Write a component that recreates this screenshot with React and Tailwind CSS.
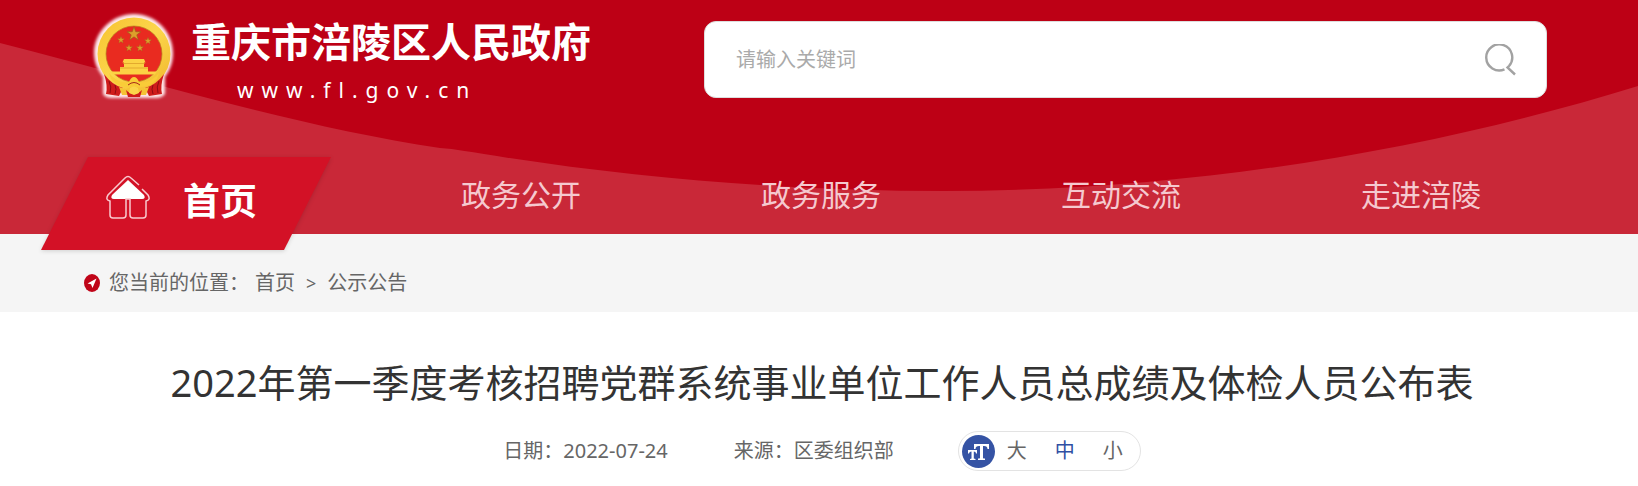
const STAR = "0,-10 2.4,-3.1 9.5,-3.1 3.8,1.2 5.9,8.1 0,3.9 -5.9,8.1 -3.8,1.2 -9.5,-3.1 -2.4,-3.1";

const SMALL_STARS = [
  [31, 30],
  [58, 31],
  [39, 38],
  [50, 38],
];

const NAV = ["政务公开", "政务服务", "互动交流", "走进涪陵"];

const SIZES = [
  { label: "大", active: false },
  { label: "中", active: true },
  { label: "小", active: false },
];

function Emblem() {
  return (
    <svg viewBox="0 0 88 94" className="h-[94px] w-[88px] shrink-0" aria-hidden="true">
      <defs>
        <filter id="glow" x="-10%" y="-10%" width="120%" height="120%">
          <feGaussianBlur stdDeviation="1.4" />
        </filter>
        <linearGradient id="gold" x1="0" y1="0" x2="1" y2="1">
          <stop offset="0" stopColor="#f6c22f" />
          <stop offset="0.5" stopColor="#fcd64c" />
          <stop offset="1" stopColor="#f0b62a" />
        </linearGradient>
      </defs>
      <path
        d="M44 4C65 4 83 21 83 43C83 53 80 60 75 67V84Q72 88 66 88H22Q15 88 13 84V67C8 60 4 53 4 43C4 21 23 4 44 4Z"
        fill="#ffe9eb"
        filter="url(#glow)"
      />
      <circle cx="44" cy="44" r="36.500" fill="url(#gold)" />
      <circle cx="44" cy="44" r="28" fill="#e92b20" stroke="#b98020" strokeWidth="0.7" />
      <polygon points={STAR} transform="translate(44 24) scale(0.72)" fill="#dda02b" stroke="#93651a" strokeWidth="0.8" />
      {SMALL_STARS.map(([x, y]) => (
        <polygon key={x} points={STAR} transform={`translate(${x} ${y}) scale(0.38)`} fill="#dda02b" stroke="#93651a" strokeWidth="0.8" />
      ))}
      <path d="M34 49H54L55.500 52.500H54V57H58V61.500H67L65 64.500H23L21 61.500H30V57H34V52.500H32.500Z" fill="#fcd244" />
      <path d="M33 53.500H55M30 58H58" stroke="#d99a25" strokeWidth="0.7" />
      <path d="M14 64Q22 75 33 78L29 86L16 84Q18 76 14 64Z M74 64Q66 75 55 78L59 86L72 84Q70 76 74 64Z" fill="#cf1c1b" />
      <path d="M19 71Q22 77 20 83M25 75Q27 79 25 84M69 71Q66 77 68 83M63 75Q61 79 63 84" stroke="#8f0c12" strokeWidth="1" fill="none" />
      <path d="M19 63Q28 74 39 72Q41 67 44 67Q47 67 49 72Q60 74 69 63L67 69Q59 78 49 77L44 79L39 77Q29 78 21 69Z" fill="#f9cc38" />
      <path d="M29 77L36 79Q44 75 52 79L59 77L56 85H32Z" fill="#f5c335" />
      <path d="M36 80Q44 88 52 80L50 87H38Z" fill="#cf1c1b" />
      <path d="M40 78Q44 75 48 78L49 83L44 85L39 83Z" fill="#fbd54b" />
      <path d="M38 75Q44 70 50 75" stroke="#a8281a" strokeWidth="1" fill="none" />
    </svg>
  );
}

export default function App() {
  return (
    <div className="bg-white font-['Noto_Sans','Noto_Sans_CJK_SC',sans-serif] text-[#666]">
      <header className="relative isolate bg-[#bd0015]">
        <svg
          viewBox="0 0 1638 234"
          preserveAspectRatio="none"
          className="absolute inset-0 -z-10 h-full w-full"
          aria-hidden="true"
        >
          <path d="M0 43C148 81 300 127 440 148C456 149 470 152 484 154C630 178 790 191 944 191C1210 191 1450 144 1638 86V234H0Z" fill="#c92838" />
        </svg>
        <div className="flex h-[157px] items-start justify-between pr-[91px] pl-[90px]">
          <a href="#home" className="flex items-start gap-[13px] pt-2.5 text-white">
            <Emblem />
            <span className="flex flex-col items-start gap-3 pt-2">
              <span className="text-[40px] leading-[48px] font-bold">重庆市涪陵区人民政府</span>
              <span className="pl-[46px] text-[21px] leading-6 tracking-[8px]">www.fl.gov.cn</span>
            </span>
          </a>
          <form className="mt-[21px] flex h-[77px] w-[843px] items-center rounded-xl border border-[#ddd] bg-white pr-[30px] pl-[31px]">
            <input
              type="text"
              aria-label="请输入关键词"
              placeholder="请输入关键词"
              className="min-w-0 flex-1 text-[20px] outline-none placeholder:text-[#aaa]"
            />
            <button type="button" aria-label="搜索">
              <svg viewBox="0 0 32 32" className="size-8" fill="none" stroke="#a2a2a2" strokeWidth="2.400">
                <path d="M20.500 25.300A13 13 0 1 1 25 22L23.500 23.500L31 30.500" />
              </svg>
            </button>
          </form>
        </div>
        <nav className="flex h-[77px] items-start pr-[67px] pl-[41px]">
          <a href="#home" className="relative isolate -mb-4 flex h-[94px] w-[330px] shrink-0 items-center gap-8 pb-1.5 pl-16 text-white">
            <svg viewBox="0 0 292 96" className="absolute top-0 left-0 -z-10 h-24 w-[292px] drop-shadow-sm" aria-hidden="true">
              <path d="M47 0H290L243 93H0Z" fill="#d31126" />
            </svg>
            <svg viewBox="0 0 46 44" className="mb-2 h-11 w-[46px]" aria-hidden="true">
              <path d="M23 5L39 20Q41 24 37 24H9Q5 24 7 20Z" fill="#fff" />
              <path d="M34 10L26 3Q23 0 20 3L3 20Q0 25 5 26V40Q5 43 8 43H18Q21 43 21 40V24H25V40Q25 43 28 43H38Q41 43 41 40V26Q46 25 43 20L37 14" fill="none" stroke="#f9c9ce" strokeWidth="1.500" />
            </svg>
            <span className="text-[37px] leading-[44px] font-bold">首页</span>
          </a>
          {NAV.map((item) => (
            <a key={item} href={`#${item}`} className="flex-1 pt-[15px] text-center text-[30px] leading-[45px] text-[#f5c9cf]">
              {item}
            </a>
          ))}
        </nav>
      </header>
      <nav aria-label="您当前的位置" className="flex h-[78px] items-center bg-[#f5f5f5] pt-5 pl-[84px] text-[20px] leading-7">
        <svg viewBox="0 0 16 18" className="mr-[9px] h-[18px] w-4" aria-hidden="true">
          <ellipse cx="8" cy="9" rx="8" ry="9" fill="#c00418" />
          <path d="M12.500 4.500L3.500 9.500L7 10.300L8.500 14Z" fill="#fff" />
        </svg>
        <span>您当前的位置：</span>
        <a href="#home" className="ml-1.5">首页</a>
        <span className="mx-[11px] text-[18px]">&gt;</span>
        <a href="#notice">公示公告</a>
      </nav>
      <main className="flex flex-col items-center pt-[42px] pl-1.5">
        <h1 className="text-[38px] leading-[56px] text-[#333]">
          2022年第一季度考核招聘党群系统事业单位工作人员总成绩及体检人员公布表
        </h1>
        <div className="mt-[21px] flex h-10 items-center text-[20px] leading-7">
          <span>日期：2022-07-24</span>
          <span className="ml-[66px]">来源：区委组织部</span>
          <div className="ml-16 flex h-10 w-[183px] items-center rounded-full border border-[#e3e3e3] pl-[3px]">
            <svg viewBox="0 0 33 33" className="mr-3 size-[33px]" aria-hidden="true">
              <circle cx="16.500" cy="16.500" r="16.500" fill="#3553a4" />
              <path d="M12 9H27V14H25.500Q25.500 11 22 11H21V23Q21 23.500 23 23.500V25H16V23.500Q18 23.500 18 23V11H17Q13.500 11 13.500 14H12Z" fill="#fff" />
              <path d="M6 15H15V18.500H14Q14 16.500 11.800 16.500V23.500L13.500 24V25H8V24L9.500 23.500V16.500Q7.200 16.500 7 18.500H6Z" fill="#fff" />
            </svg>
            <div className="flex gap-7">
              {SIZES.map(({ label, active }) => (
                <button key={label} type="button" className={active ? "text-[#2f4fa3]" : "text-[#666]"}>
                  {label}
                </button>
              ))}
            </div>
          </div>
        </div>
      </main>
    </div>
  );
}
